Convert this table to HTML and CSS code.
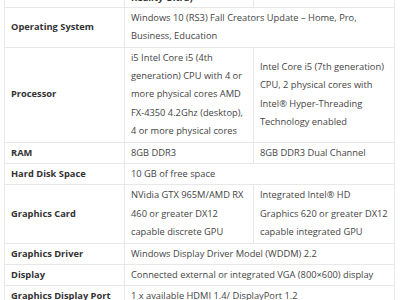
FILE: index.html
```html
<!DOCTYPE html>
<html lang="en">

<head>
    <meta charset="UTF-8">
    <title>Windows Mixed Reality PC Requirements</title>
    <link rel="stylesheet" href="styles.css">
</head>

<body>
    <div class="wrap">
        <table class="specs">
            <colgroup>
                <col class="col-label">
                <col class="col-min">
                <col class="col-ultra">
            </colgroup>
            <tr class="head">
                <td></td>
                <td>Windows Mixed Reality PCs (Windows Mixed Reality Ultra)</td>
                <td></td>
            </tr>
            <tr>
                <th>Operating System</th>
                <td colspan="2">Windows 10 (RS3) Fall Creators Update – Home, Pro, Business, Education</td>
            </tr>
            <tr>
                <th>Processor</th>
                <td>i5 Intel Core i5 (4th generation) CPU with 4 or more physical cores AMD FX-4350 4.2Ghz (desktop), 4 or more physical cores</td>
                <td>Intel Core i5 (7th generation) CPU, 2 physical cores with Intel® Hyper-Threading Technology enabled</td>
            </tr>
            <tr>
                <th>RAM</th>
                <td>8GB DDR3</td>
                <td>8GB DDR3 Dual Channel</td>
            </tr>
            <tr>
                <th>Hard Disk Space</th>
                <td colspan="2">10 GB of free space</td>
            </tr>
            <tr>
                <th>Graphics Card</th>
                <td>NVidia GTX 965M/AMD RX 460 or greater DX12 capable discrete GPU</td>
                <td>Integrated Intel® HD Graphics 620 or greater DX12 capable integrated GPU</td>
            </tr>
            <tr>
                <th>Graphics Driver</th>
                <td colspan="2">Windows Display Driver Model (WDDM) 2.2</td>
            </tr>
            <tr>
                <th>Display</th>
                <td colspan="2">Connected external or integrated VGA (800×600) display</td>
            </tr>
            <tr>
                <th>Graphics Display Port</th>
                <td colspan="2">1 x available HDMI 1.4/ DisplayPort 1.2</td>
            </tr>
        </table>
    </div>
</body>
</html>
```

FILE: styles.css
```css
body {
    font-family: "Open Sans", Arial, sans-serif;
    margin: 0;
    padding: 0;
    background-color: #fff;
    color: #444;
}

.wrap {
    padding: 0 5px 0 4px;
    margin-top: -48px;
}

.specs {
    width: 391px;
    table-layout: fixed;
    border-collapse: collapse;
    font-size: 9.3px;
    line-height: 18.4px;
}

.col-label {
    width: 120px;
}

.col-min {
    width: 129px;
}

.specs th,
.specs td {
    border: 1px solid #e8e8e8;
    padding: 1px 6px;
    text-align: left;
    vertical-align: middle;
}

.specs th {
    font-weight: bold;
    color: #333;
}

.head td {
    font-weight: bold;
    color: #333;
    padding-bottom: 0;
    line-height: 17.6px;
}
```
